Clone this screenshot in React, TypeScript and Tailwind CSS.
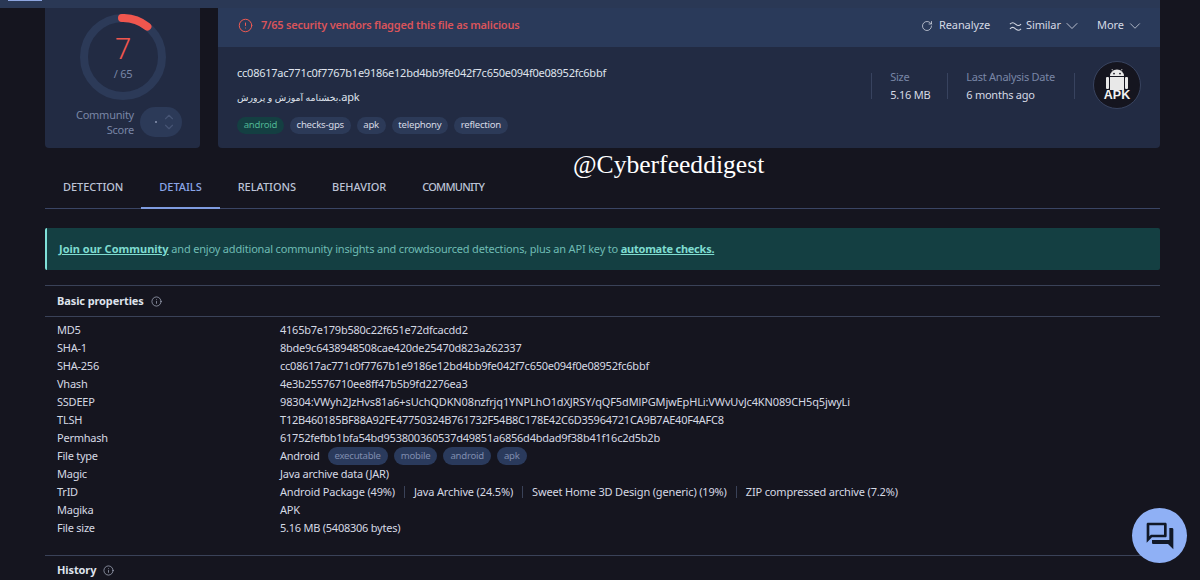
import React from "react";
import { RotateCw, ChevronDown, ChevronUp, Info, AlertCircle } from "lucide-react";

const rows: [string, React.ReactNode][] = [
  ["MD5", "4165b7e179b580c22f651e72dfcacdd2"],
  ["SHA-1", "8bde9c6438948508cae420de25470d823a262337"],
  ["SHA-256", "cc08617ac771c0f7767b1e9186e12bd4bb9fe042f7c650e094f0e08952fc6bbf"],
  ["Vhash", "4e3b25576710ee8ff47b5b9fd2276ea3"],
  ["SSDEEP", <span key="ss" className="tracking-[-0.14px]">98304:VWyh2JzHvs81a6+sUchQDKN08nzfrjq1YNPLhO1dXJRSY/qQF5dMlPGMjwEpHLi:VWvUvJc4KN089CH5q5jwyLi</span>],
  ["TLSH", "T12B460185BF88A92FE47750324B761732F54B8C178E42C6D35964721CA9B7AE40F4AFC8"],
  ["Permhash", "61752fefbb1bfa54bd953800360537d49851a6856d4bdad9f38b41f16c2d5b2b"],
  [
    "File type",
    <div className="flex items-center" key="ft">
      <span>Android</span>
      <div className="ml-[8px] flex gap-[6px] text-[9.6px] text-[#7f8cae]">
        {["executable", "mobile", "android", "apk"].map((t) => (
          <span key={t} className="flex h-[18px] items-center rounded-full bg-[#2a3a5c] px-[7px]">{t}</span>
        ))}
      </div>
    </div>,
  ],
  ["Magic", "Java archive data (JAR)"],
  [
    "TrID",
    <div className="flex items-center tracking-[-0.16px]" key="trid">
      {["Android Package (49%)", "Java Archive (24.5%)", "Sweet Home 3D Design (generic) (19%)", "ZIP compressed archive (7.2%)"].map((t, i) => (
        <span key={t} className={i ? "ml-[9px] border-l border-[#3a4258] pl-[9px] leading-[12px]" : "leading-[12px]"}>{t}</span>
      ))}
    </div>,
  ],
  ["Magika", "APK"],
  ["File size", "5.16 MB (5408306 bytes)"],
];

const tags = ["checks-gps", "apk", "telephony", "reflection"];
const tabs = ["DETECTION", "DETAILS", "RELATIONS", "BEHAVIOR", "COMMUNITY"];

export default function App() {
  return (
    <div className="relative h-[580px] w-[1200px] overflow-hidden bg-[#15151f] text-[11px] tracking-[-0.24px] text-[#d5d9e4] [font-family:'Noto_Sans','DejaVu_Sans',sans-serif]">
      <div className="h-[8px] w-[1160px] bg-[#2a3855]">
        <div className="ml-[8px] h-[1px] w-[34px] bg-[#8ea6e0]" />
      </div>

      <div className="ml-[45px] w-[1115px]">
        <div className="flex h-[140px] gap-[18px]">
          <div className="flex w-[155px] flex-col rounded-b-[4px] bg-[#222b43]">
            <div className="relative mt-[6px] ml-[35px] h-[86px] w-[86px]">
              <svg width="86" height="86" viewBox="0 0 86 86" className="block">
                <circle cx="43" cy="43" r="39" fill="none" stroke="#2c3a58" strokeWidth="8" />
                <path d="M 42 4 A 39 39 0 0 1 67.4 12.6" fill="none" stroke="#f0564e" strokeWidth="8" strokeLinecap="round" />
              </svg>
              <div className="absolute inset-0 flex flex-col items-center">
                <span className="mt-[15px] text-[29px] leading-[38px] font-light text-[#f0564e]">7</span>
                <span className="-mt-[1px] text-[11px] leading-[16px] text-[#7986a6]">/ 65</span>
              </div>
            </div>
            <div className="mt-[7px] flex items-center">
              <div className="w-[89px] text-right text-[11px] leading-[15px] text-[#7986a6]">Community<br />Score</div>
              <div className="ml-[6px] flex h-[30px] w-[42px] items-center rounded-full bg-[#2c3a58] text-[#465474]">
                <span className="ml-[15px] h-[2px] w-[2px] rounded-full bg-[#8a96b2]" />
                <div className="ml-[5px] flex flex-col">
                  <ChevronUp size={14} strokeWidth={2} className="-mb-[2px]" />
                  <ChevronDown size={14} strokeWidth={2} className="-mt-[2px]" />
                </div>
              </div>
            </div>
          </div>

          <div className="flex flex-1 flex-col rounded-b-[4px] bg-[#222b43]">
            <div className="flex h-[39px] items-center bg-[#2a3a5a] pr-[20px] pb-[4px] pl-[20px]">
              <AlertCircle size={15} strokeWidth={1.6} className="text-[#ef5a52]" />
              <span className="ml-[8px] font-semibold tracking-[-0.22px] text-[#d9545a]">7/65 security vendors flagged this file as malicious</span>
              <div className="ml-auto flex items-center tracking-[-0.1px] text-[#d5d9e4]">
                <RotateCw size={12} strokeWidth={1.5} />
                <span className="ml-[6px] w-[51px]">Reanalyze</span>
                <svg width="13" height="10" viewBox="0 0 14 10" className="ml-[19px]" fill="none" stroke="currentColor" strokeWidth="1.1">
                  <path d="M1 3c2-2 4-2 6 0s4 2 6 0" />
                  <path d="M1 8c2-2 4-2 6 0s4 2 6 0" />
                </svg>
                <span className="ml-[4px] w-[36px]">Similar</span>
                <ChevronDown size={20} strokeWidth={1} />
                <span className="ml-[15px] w-[26px]">More</span>
                <ChevronDown size={18} strokeWidth={1} className="ml-[3px] -mr-[4px]" />
              </div>
            </div>
            <div className="flex flex-1 pl-[19px]">
              <div className="flex-1 pt-[18px]">
                <div className="leading-[16px] text-[#dfe3ec]">cc08617ac771c0f7767b1e9186e12bd4bb9fe042f7c650e094f0e08952fc6bbf</div>
                <div className="mt-[8px] leading-[16px] text-[#dfe3ec]" dir="ltr"><span className="text-[9.4px]">بخشنامه آموزش و پرورش</span>.apk</div>
                <div className="mt-[11px] flex gap-[6px] text-[9.6px]">
                  <span className="flex h-[17px] items-center rounded-full bg-[#143f42] px-[6.7px] text-[#4fb594]">android</span>
                  {tags.map((t) => (
                    <span key={t} className="flex h-[17px] items-center rounded-full bg-[#2c3a58] px-[6.7px] text-[#d5d9e4]">{t}</span>
                  ))}
                </div>
              </div>
              <div className="mt-[26px] flex h-[26px] items-start pr-[19px]">
                <div className="h-[26px] w-[76px] border-l border-[#38435f] pl-[18px]">
                  <div className="-mt-[4px] leading-[16px] text-[#7986a6]">Size</div>
                  <div className="mt-[2px] leading-[16px] text-[#d5d9e4]">5.16 MB</div>
                </div>
                <div className="h-[26px] border-l border-[#38435f] pr-[19px] pl-[18px]">
                  <div className="-mt-[4px] leading-[16px] text-[#7986a6]">Last Analysis Date</div>
                  <div className="mt-[2px] leading-[16px] text-[#d5d9e4]">6 months ago</div>
                </div>
                <div className="h-[26px] border-l border-[#38435f] pl-[18px]">
                  <div className="-mt-[12px] flex h-[48px] w-[48px] flex-col items-center rounded-full border border-[#38435f] bg-[#15151f]">
                    <svg width="24" height="21" viewBox="0 0 24 21" className="mt-[7px]" fill="#e8e8e8">
                      <path d="M5 7a7 6.5 0 0 1 14 0z" />
                      <circle cx="9" cy="4.6" r="0.9" fill="#15151f" />
                      <circle cx="15" cy="4.6" r="0.9" fill="#15151f" />
                      <path d="M8 1.6 6.8 0M16 1.6 17.2 0" stroke="#e8e8e8" strokeWidth="0.8" />
                      <rect x="5" y="8" width="14" height="13" />
                      <rect x="1" y="8" width="3" height="12" rx="1" />
                      <rect x="20" y="8" width="3" height="12" rx="1" />
                    </svg>
                    <span className="text-[12.5px] leading-[11px] font-bold tracking-normal text-[#f2f2f2] [font-family:'Liberation_Sans',sans-serif]">APK</span>
                  </div>
                </div>
              </div>
            </div>
          </div>
        </div>

        <div className="mt-[18px] flex h-[43px] border-b border-[#3a4564] font-medium tracking-[-0.04px]">
          {tabs.map((t, i) => (
            <div
              key={t}
              className={
                i === 1
                  ? "-mb-[1px] flex items-center border-y-2 border-t-transparent border-b-[#7f9ce0] px-[18px] text-[#8aa5e8]"
                  : i === 4
                    ? "flex items-center px-[18px] tracking-[-0.75px] text-[#bcc3d6]"
                    : "flex items-center px-[18px] text-[#bcc3d6]"
              }
            >
              {t}
            </div>
          ))}
        </div>

        <div className="mt-[19px] flex h-[42px] items-center rounded-[2px] border-l-2 border-[#7fe0d8] bg-[#143f42] pl-[12px] tracking-[-0.18px] text-[#6fbcb4]">
          <span>
            <span className="font-bold tracking-[0px] text-[#7fdcd0] underline">Join our Community</span> and enjoy additional community insights and crowdsourced detections, plus an API key to{" "}
            <span className="font-bold tracking-[-0.24px] text-[#7fdcd0] underline">automate checks.</span>
          </span>
        </div>

        <div className="mt-[15px] flex h-[32px] items-center gap-[7px] border-y border-[#3a4258] pl-[12px]">
          <span className="font-bold tracking-[-0.1px] text-[#dfe3ec]">Basic properties</span>
          <Info size={11} strokeWidth={1.4} className="text-[#bcc3d6]" />
        </div>

        <div className="mt-[4px] flex flex-col">
          {rows.map(([k, v]) => (
            <div key={k} className="grid h-[18px] grid-cols-[223px_1fr] items-center pl-[12px] text-[#d5d9e4]">
              <div>{k}</div>
              <div>{v}</div>
            </div>
          ))}
        </div>

        <div className="mt-[18px] flex h-[29px] items-center gap-[7px] border-t border-[#3a4258] pl-[12px]">
          <span className="font-bold tracking-[-0.1px] text-[#dfe3ec]">History</span>
          <Info size={11} strokeWidth={1.4} className="text-[#bcc3d6]" />
        </div>
      </div>

      <div className="absolute top-[148px] left-[573px] text-[25.6px] leading-[34px] tracking-normal text-white [font-family:'Liberation_Serif',serif]">@Cyberfeeddigest</div>

      <div className="absolute top-[508px] left-[1132px] flex h-[55px] w-[55px] items-center justify-center rounded-full bg-[#8fb0f5]">
        <svg width="32" height="32" viewBox="0 0 24 24" fill="#111827">
          <path d="M15 4v7H5.17L4 12.17V4h11m1-2H3c-.55 0-1 .45-1 1v14l4-4h10c.55 0 1-.45 1-1V3c0-.55-.45-1-1-1zm5 4h-2v9H6v2c0 .55.45 1 1 1h11l4 4V7c0-.55-.45-1-1-1z" />
        </svg>
      </div>
    </div>
  );
}
